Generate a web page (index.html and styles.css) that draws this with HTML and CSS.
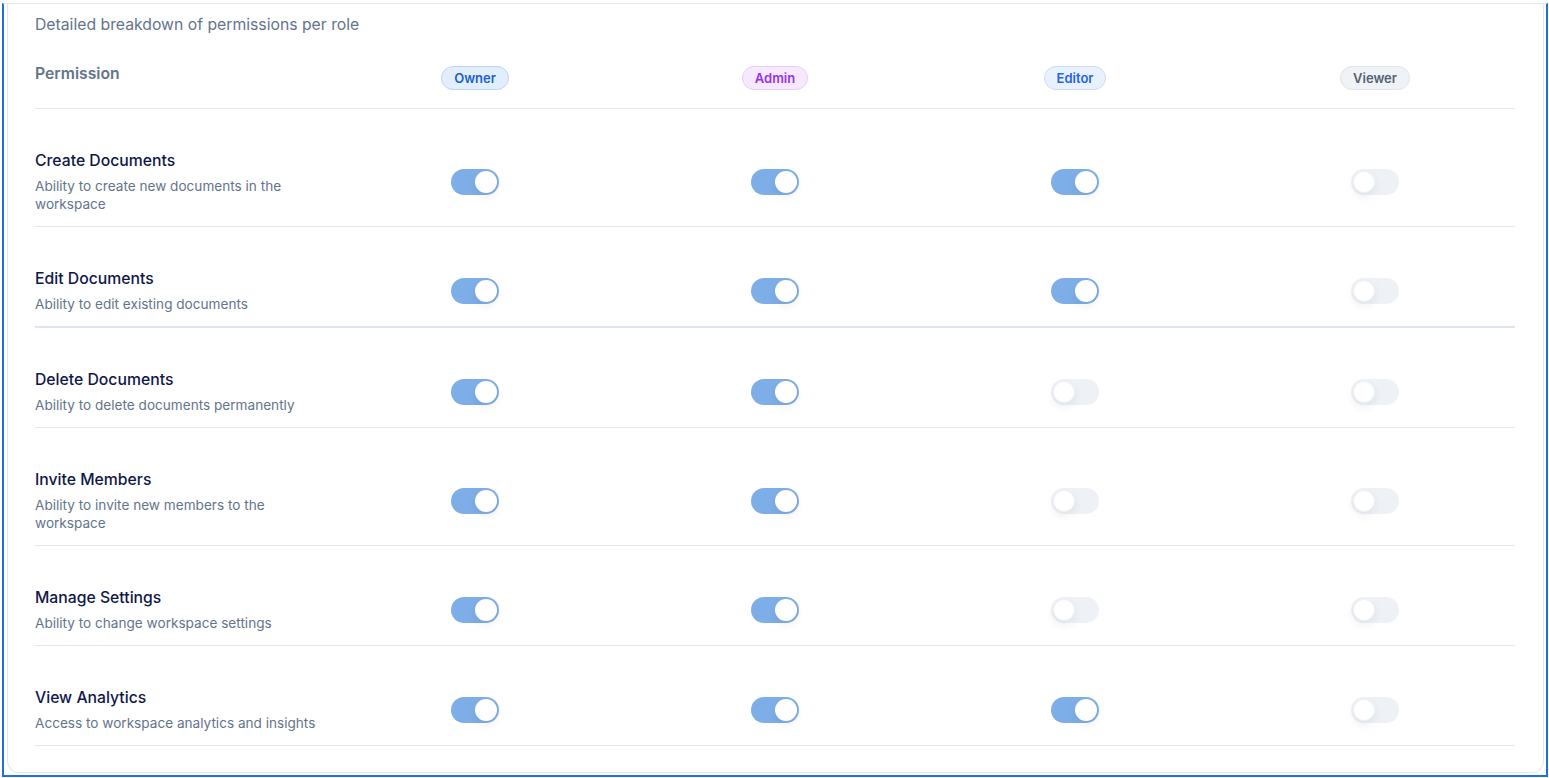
FILE: index.html
```html
<!DOCTYPE html>
<html lang="en">
<head>
<meta charset="utf-8">
<title>Permissions</title>
<link rel="stylesheet" href="styles.css">
</head>
<body>
<div class="frame">
  <div class="card">
    <p class="subtitle">Detailed breakdown of permissions per role</p>
    <div class="table">
      <div class="row head">
        <div class="perm-label">Permission</div>
        <div class="cell"><span class="badge owner">Owner</span></div>
        <div class="cell"><span class="badge admin">Admin</span></div>
        <div class="cell"><span class="badge editor">Editor</span></div>
        <div class="cell"><span class="badge viewer">Viewer</span></div>
      </div>

      <div class="row">
        <div class="perm"><div class="title">Create Documents</div><div class="desc">Ability to create new documents in the workspace</div></div>
        <div class="cell"><span class="toggle on"><span class="knob"></span></span></div>
        <div class="cell"><span class="toggle on"><span class="knob"></span></span></div>
        <div class="cell"><span class="toggle on"><span class="knob"></span></span></div>
        <div class="cell"><span class="toggle"><span class="knob"></span></span></div>
      </div>

      <div class="row thick">
        <div class="perm"><div class="title">Edit Documents</div><div class="desc">Ability to edit existing documents</div></div>
        <div class="cell"><span class="toggle on"><span class="knob"></span></span></div>
        <div class="cell"><span class="toggle on"><span class="knob"></span></span></div>
        <div class="cell"><span class="toggle on"><span class="knob"></span></span></div>
        <div class="cell"><span class="toggle"><span class="knob"></span></span></div>
      </div>

      <div class="row">
        <div class="perm"><div class="title">Delete Documents</div><div class="desc">Ability to delete documents permanently</div></div>
        <div class="cell"><span class="toggle on"><span class="knob"></span></span></div>
        <div class="cell"><span class="toggle on"><span class="knob"></span></span></div>
        <div class="cell"><span class="toggle"><span class="knob"></span></span></div>
        <div class="cell"><span class="toggle"><span class="knob"></span></span></div>
      </div>

      <div class="row">
        <div class="perm"><div class="title">Invite Members</div><div class="desc">Ability to invite new members to the workspace</div></div>
        <div class="cell"><span class="toggle on"><span class="knob"></span></span></div>
        <div class="cell"><span class="toggle on"><span class="knob"></span></span></div>
        <div class="cell"><span class="toggle"><span class="knob"></span></span></div>
        <div class="cell"><span class="toggle"><span class="knob"></span></span></div>
      </div>

      <div class="row">
        <div class="perm"><div class="title">Manage Settings</div><div class="desc">Ability to change workspace settings</div></div>
        <div class="cell"><span class="toggle on"><span class="knob"></span></span></div>
        <div class="cell"><span class="toggle on"><span class="knob"></span></span></div>
        <div class="cell"><span class="toggle"><span class="knob"></span></span></div>
        <div class="cell"><span class="toggle"><span class="knob"></span></span></div>
      </div>

      <div class="row">
        <div class="perm"><div class="title">View Analytics</div><div class="desc">Access to workspace analytics and insights</div></div>
        <div class="cell"><span class="toggle on"><span class="knob"></span></span></div>
        <div class="cell"><span class="toggle on"><span class="knob"></span></span></div>
        <div class="cell"><span class="toggle on"><span class="knob"></span></span></div>
        <div class="cell"><span class="toggle"><span class="knob"></span></span></div>
      </div>
    </div>
  </div>
</div>
</body>
</html>
```
FILE: styles.css
```css
* { box-sizing: border-box; }
html, body { margin: 0; padding: 0; background: #ffffff; }
body {
  font-family: Inter, "Noto Sans", "Liberation Sans", sans-serif;
  width: 1549px;
  height: 778px;
  overflow: hidden;
}
.frame {
  margin: 3px 1px 1px 2px;
  border-top: 1px solid #e2e8f0;
  border-left: 2px solid #1f6fdc;
  border-right: 2px solid #1f6fdc;
  border-bottom: 2px solid #1f6fdc;
  padding: 0 2px 2px 3px;
}
.card {
  background: #fff;
  border: 1px solid #e2e8f0;
  border-top: 0;
  border-radius: 0 0 12px 12px;
  padding: 10px 28px 26px 27px;
  height: 769px;
}
.subtitle {
  margin: 0;
  font-size: 15.75px;
  line-height: 22px;
  color: #64748b;
}
.table { width: 1480px; }
.row {
  display: grid;
  grid-template-columns: 290px repeat(4, 300px);
  align-items: center;
  border-bottom: 1px solid #e2e8f0;
  padding: 41px 0 13px;
}
.row.thick { border-bottom: 2px solid #dfe5ee; }
.row.head {
  align-items: start;
  margin-top: 26px;
  padding: 0 0 18px;
}
.perm-label {
  padding-top: 1px;
  font-size: 15.75px;
  line-height: 22px;
  font-weight: 600;
  color: #64748b;
}
.cell { display: flex; justify-content: center; }
.head .cell { padding-top: 4px; }
.badge {
  display: inline-block;
  font-size: 13px;
  line-height: 22px;
  font-weight: 600;
  padding: 0 12px;
  border-radius: 999px;
  border: 1px solid;
}
.badge.owner { background: #e3eefc; border-color: #b9d5f6; color: #1c5fc9; }
.badge.admin { background: #f6e9fe; border-color: #ebccfb; color: #9333ea; }
.badge.editor { background: #e9f1fd; border-color: #cadcf7; color: #2563eb; }
.badge.viewer { background: #eff2f6; border-color: #e0e5ec; color: #556173; }
.title {
  font-size: 15.75px;
  line-height: 22px;
  font-weight: 500;
  color: #101748;
}
.desc {
  margin-top: 5px;
  font-size: 13.6px;
  line-height: 18px;
  color: #64748b;
}
.toggle {
  position: relative;
  display: inline-block;
  width: 48px;
  height: 26px;
  border-radius: 13px;
  background: #eef2f7;
}
.toggle.on { background: #7eaee8; }
.knob {
  position: absolute;
  top: 2px;
  left: 2px;
  width: 22px;
  height: 22px;
  border-radius: 50%;
  background: #fff;
  box-shadow: 0 4px 10px rgba(15, 23, 42, 0.07);
}
.toggle:not(.on) .knob { border: 1px solid #eef1f5; }
.toggle.on .knob { left: 24px; }
```
